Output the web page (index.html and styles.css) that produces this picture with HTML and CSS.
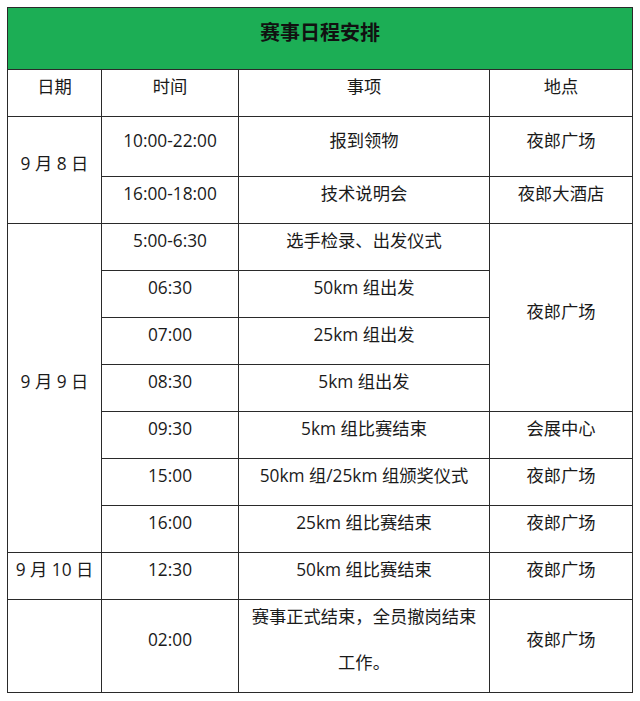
FILE: index.html
```html
<!DOCTYPE html>
<html lang="zh">
<head>
<meta charset="utf-8">
<title>赛事日程安排</title>
<link rel="stylesheet" href="styles.css">
</head>
<body>
<table class="schedule">
  <colgroup>
    <col class="c-date"><col class="c-time"><col class="c-item"><col class="c-place">
  </colgroup>
  <tr class="title-row"><td colspan="4"><span>赛事日程安排</span></td></tr>
  <tr class="head-row">
    <td><span>日期</span></td><td><span>时间</span></td><td><span>事项</span></td><td><span>地点</span></td>
  </tr>
  <tr class="tall">
    <td rowspan="2"><span>9 月 8 日</span></td>
    <td><span>10:00-22:00</span></td>
    <td><span>报到领物</span></td>
    <td><span>夜郎广场</span></td>
  </tr>
  <tr>
    <td><span>16:00-18:00</span></td>
    <td><span>技术说明会</span></td>
    <td><span>夜郎大酒店</span></td>
  </tr>
  <tr>
    <td rowspan="7"><span>9 月 9 日</span></td>
    <td><span>5:00-6:30</span></td>
    <td><span>选手检录、出发仪式</span></td>
    <td rowspan="4"><span>夜郎广场</span></td>
  </tr>
  <tr><td><span>06:30</span></td><td><span>50km 组出发</span></td></tr>
  <tr><td><span>07:00</span></td><td><span>25km 组出发</span></td></tr>
  <tr><td><span>08:30</span></td><td><span>5km 组出发</span></td></tr>
  <tr><td><span>09:30</span></td><td><span>5km 组比赛结束</span></td><td><span>会展中心</span></td></tr>
  <tr><td><span>15:00</span></td><td><span>50km 组/25km 组颁奖仪式</span></td><td><span>夜郎广场</span></td></tr>
  <tr><td><span>16:00</span></td><td><span>25km 组比赛结束</span></td><td><span>夜郎广场</span></td></tr>
  <tr>
    <td><span>9 月 10 日</span></td>
    <td><span>12:30</span></td>
    <td><span>50km 组比赛结束</span></td>
    <td><span>夜郎广场</span></td>
  </tr>
  <tr>
    <td></td>
    <td><span>02:00</span></td>
    <td><span>赛事正式结束，全员撤岗结束工作。</span></td>
    <td><span>夜郎广场</span></td>
  </tr>
</table>
</body>
</html>
```

FILE: styles.css
```css
html, body {
  margin: 0;
  padding: 0;
  background: #ffffff;
}

body {
  padding: 7px 0 0 7px;
  font-family: "Open Sans", "Noto Sans CJK SC", sans-serif;
  color: #1a1a1a;
}

.schedule {
  border-collapse: collapse;
  table-layout: fixed;
  width: 625px;
}

.c-date { width: 94px; }
.c-time { width: 137px; }
.c-item { width: 251px; }
.c-place { width: 143px; }

.schedule td {
  border: 1px solid #2a2a2a;
  padding: 0 6px;
  text-align: center;
  vertical-align: middle;
  font-size: 17.3px;
  line-height: 46px;
}

.schedule td > span {
  line-height: 34px;
  vertical-align: 6px;
}

.title-row td {
  background: #1cae55;
  font-size: 20px;
  font-weight: bold;
  line-height: 61px;
  color: #111;
}

.title-row td > span {
  line-height: 49px;
}

.tall td {
  padding-top: 7px;
  padding-bottom: 6px;
}

.tall td[rowspan] {
  padding-top: 0;
  padding-bottom: 0;
}
```
